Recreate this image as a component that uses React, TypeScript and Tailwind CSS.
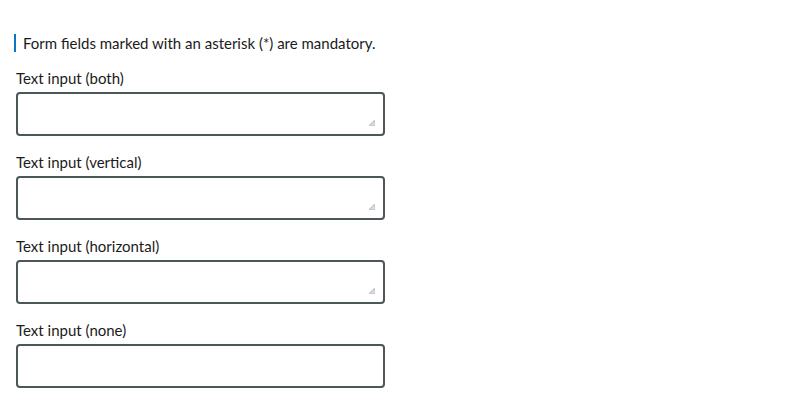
const fields = [
  { id: "both", label: "Text input (both)", resize: "resize", grip: true },
  { id: "vertical", label: "Text input (vertical)", resize: "resize-y", grip: true },
  { id: "horizontal", label: "Text input (horizontal)", resize: "resize-x", grip: true },
  { id: "none", label: "Text input (none)", resize: "resize-none", grip: false },
];

function Grip() {
  return (
    <svg
      className="pointer-events-none absolute right-[10px] bottom-[10px]"
      width="6"
      height="6"
      viewBox="0 0 6 6"
    >
      <path d="M5 0 L6 0 L6 6 L0 6 L0 5 Z" fill="#c9c9c9" />
      <path d="M5 2 L5 5 L2 5 Z" fill="#e2e2e2" />
    </svg>
  );
}

export default function App() {
  return (
    <div className="min-h-screen bg-white px-4 pt-[34px] font-['Lato','Liberation_Sans',sans-serif] text-[15px] text-[#1b1b1b]">
      <p className="-ml-[2px] border-l-2 border-[#0a77c4] pl-[7px] leading-[18px]">
        Form fields marked with an asterisk (*) are mandatory.
      </p>
      <div className="mt-[16px] flex flex-col gap-[16px]">
        {fields.map((f) => (
          <div key={f.id} className="flex flex-col">
            <label htmlFor={f.id} className="mb-[4px] leading-[20px]">
              {f.label}
            </label>
            <div className="relative w-[369px]">
              <textarea
                id={f.id}
                className={`block h-[44px] w-[369px] rounded-[4px] border-2 border-[#4b5759] bg-white [&::-webkit-resizer]:bg-transparent ${f.resize}`}
              />
              {f.grip && <Grip />}
            </div>
          </div>
        ))}
      </div>
    </div>
  );
}
